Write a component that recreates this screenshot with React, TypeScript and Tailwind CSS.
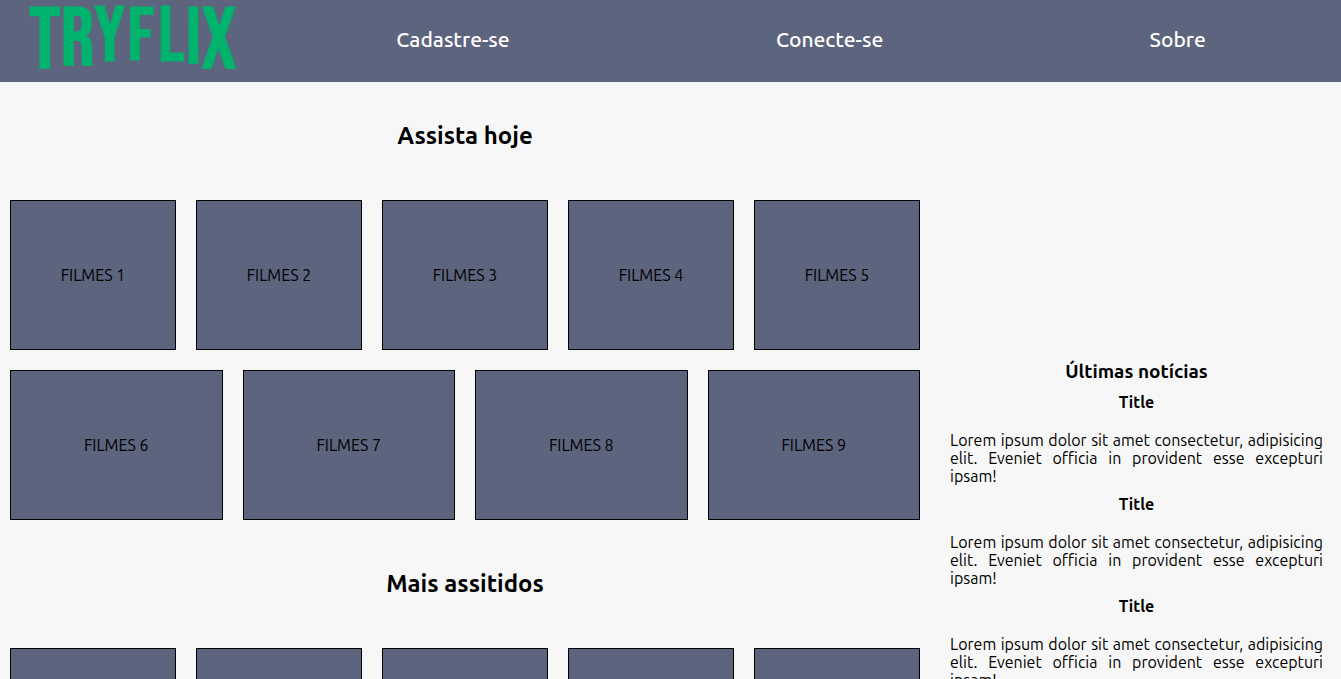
const navLinks = ["Cadastre-se", "Conecte-se", "Sobre"];

const sections = [
  { title: "Assista hoje", first: 1 },
  { title: "Mais assitidos", first: 1 },
];

const news = [1, 2, 3];

// Letters share one top line; their sizes dip in the middle to form the arch.
function Logo() {
  return (
    <a href="#" aria-label="TRYFLIX" className="block w-[263px] shrink-0 pl-7">
      <svg viewBox="0 0 212 78" className="h-[78px] w-[212px] overflow-visible" role="img" aria-label="TRYFLIX">
        <text
          x="1"
          y="67"
          className="fill-[#00b46e] stroke-[#00b46e] stroke-1 font-normal font-['Bebas_Neue','League_Gothic','Oswald',sans-serif]"
        >
          <tspan y="68" className="text-[87px]">T</tspan>
          <tspan y="65" className="text-[83px]">R</tspan>
          <tspan y="61" className="text-[78px]">Y</tspan>
          <tspan dx="3" y="60" className="text-[76px]">F</tspan>
          <tspan dx="4" y="61" className="text-[78px]">L</tspan>
          <tspan dx="1" y="63" className="text-[80px]">I</tspan>
          <tspan y="68" className="text-[87px]">X</tspan>
        </text>
      </svg>
    </a>
  );
}

function MovieSection({ title, first }: { title: string; first: number }) {
  return (
    <section>
      <h2 className="py-10 text-center text-2xl leading-7 font-bold">{title}</h2>
      <div className="flex flex-wrap gap-5 p-2.5">
        {Array.from({ length: 9 }, (_, i) => (
          <article
            key={i}
            className="flex h-[150px] flex-[1_1_150px] items-center justify-center border border-black bg-[#5d647d]"
          >
            FILMES {first + i}
          </article>
        ))}
      </div>
    </section>
  );
}

export default function App() {
  return (
    <div className="min-h-screen bg-[#f7f7f7] font-[Ubuntu,'Noto_Sans',sans-serif] text-base leading-[18px] text-black">
      <header className="flex items-center bg-[#5d647d] pb-1">
        <Logo />
        <nav className="flex flex-1 justify-around pr-0.5">
          {navLinks.map((label) => (
            <a key={label} href="#" className="text-[21px] leading-6 font-medium text-white">
              {label}
            </a>
          ))}
        </nav>
      </header>
      <div className="flex">
        <main className="min-w-0 flex-1">
          {sections.map((s) => (
            <MovieSection key={s.title} {...s} />
          ))}
        </main>
        <aside className="w-[411px] shrink-0 self-center pr-[18px] pl-5">
          <h2 className="pb-3 text-center text-[19px] leading-5 font-bold">Últimas notícias</h2>
          {news.map((n) => (
            <article key={n} className="pb-2.5">
              <h3 className="pb-5 text-center font-bold">Title</h3>
              <p className="text-justify">
                Lorem ipsum dolor sit amet consectetur, adipisicing elit. Eveniet officia in
                provident esse excepturi ipsam!
              </p>
            </article>
          ))}
        </aside>
      </div>
    </div>
  );
}
